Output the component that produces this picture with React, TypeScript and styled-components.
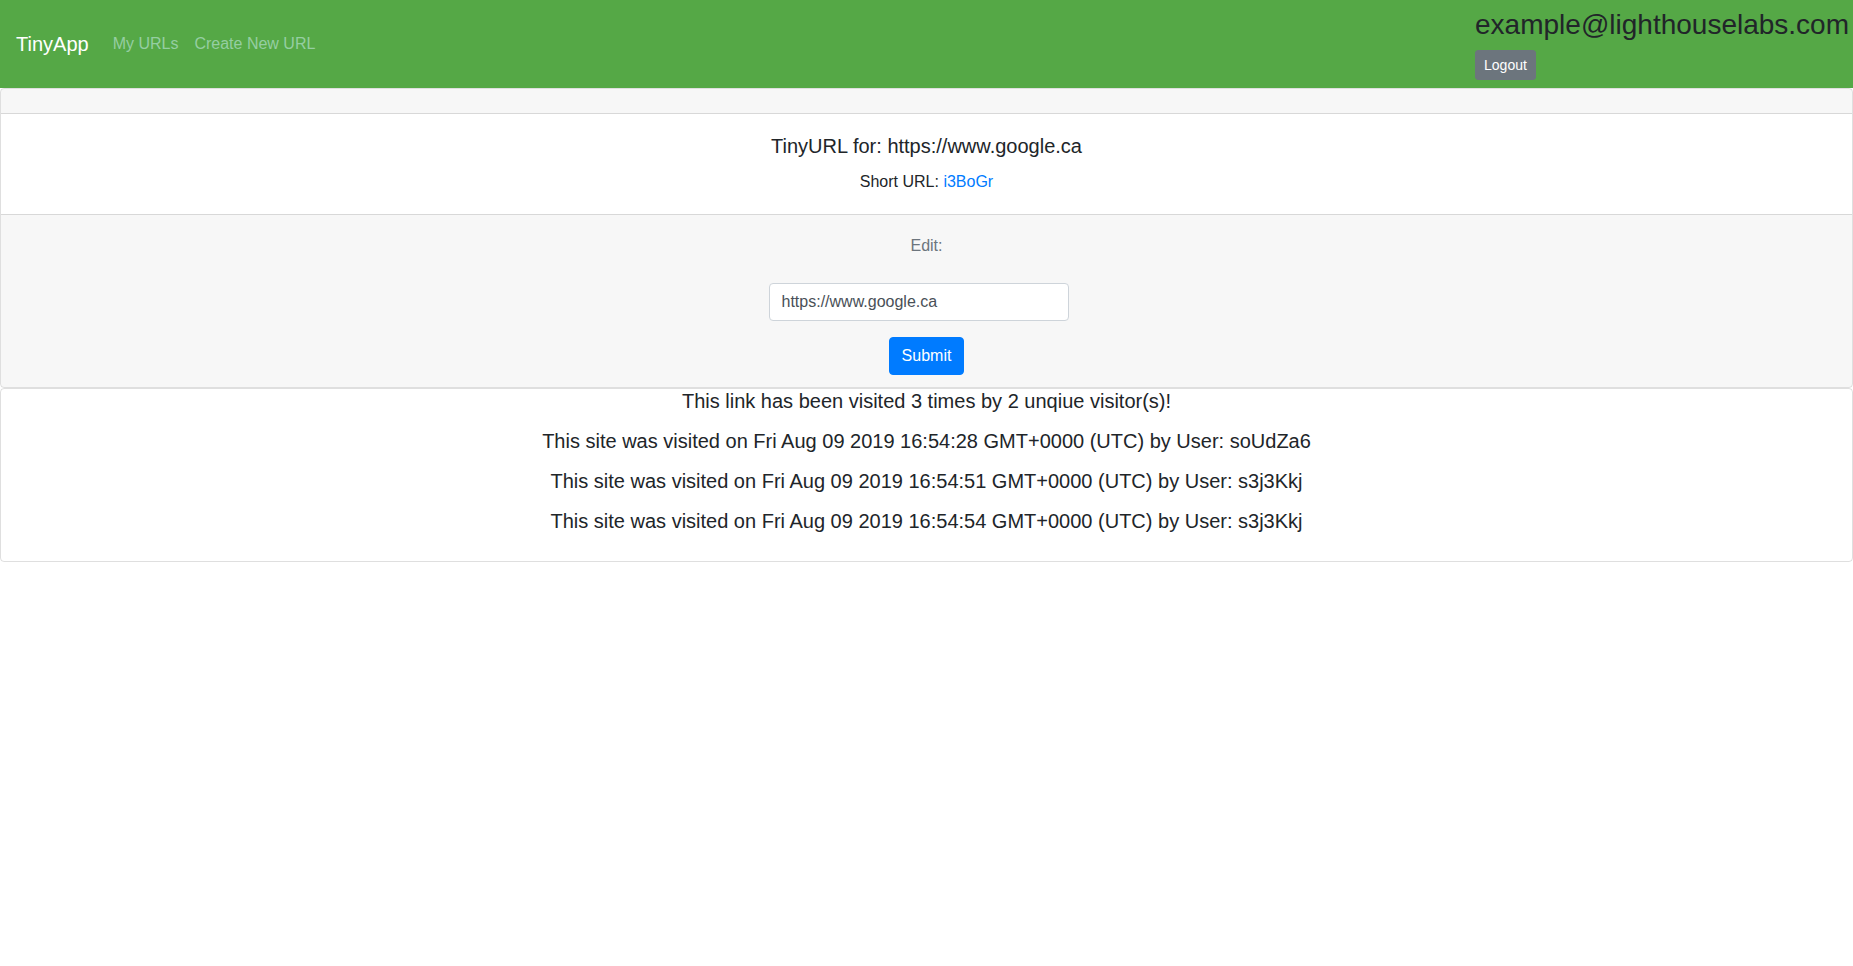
import React from 'react';
import styled, {createGlobalStyle} from 'styled-components';

const GlobalStyle = createGlobalStyle`
  * {
    box-sizing: border-box;
  }
  body {
    margin: 0;
    background: #fff;
    color: #212529;
    font-family: "Liberation Sans", Arial, sans-serif;
    font-size: 16px;
    line-height: 1.5;
  }
`

const Navbar = styled.nav`
  display: flex;
  align-items: center;
  height: 88px;
  background: #55a846;
  padding: 8px 4px 8px 16px;
`

const Brand = styled.a`
  color: #fff;
  font-size: 20px;
  line-height: 30px;
  margin-right: 16px;
  text-decoration: none;
`

const NavList = styled.ul`
  display: flex;
  list-style: none;
  margin: 0;
  padding: 0;

  a {
    display: block;
    padding: 8px;
    color: #95cea2;
    text-decoration: none;
  }
`

const UserBox = styled.div`
  margin-left: auto;
  display: flex;
  flex-direction: column;
  align-items: flex-start;

  h3 {
    margin: 0 0 8px;
    font-size: 28px;
    font-weight: 400;
    line-height: 1.2;
    color: #212529;
  }
`

const Button = styled.button<{ $variant: 'primary' | 'secondary'; $small?: boolean }>`
  font-family: inherit;
  color: #fff;
  background: ${({$variant}) => ($variant === 'primary' ? '#007bff' : '#6c757d')};
  border: 1px solid ${({$variant}) => ($variant === 'primary' ? '#007bff' : '#6c757d')};
  font-size: ${({$small}) => ($small ? '14px' : '16px')};
  line-height: ${({$small}) => ($small ? '20px' : '24px')};
  padding: ${({$small}) => ($small ? '4px 8px' : '6px 12px')};
  border-radius: ${({$small}) => ($small ? '3px' : '4px')};
  cursor: pointer;
`

const Card = styled.div`
  border: 1px solid rgba(0, 0, 0, 0.125);
  border-radius: 4px;
  overflow: hidden;
  text-align: center;
`

const CardHeader = styled.div`
  height: 25px;
  background: rgba(0, 0, 0, 0.03);
  border-bottom: 1px solid rgba(0, 0, 0, 0.125);
`

const CardBody = styled.div`
  padding: 20px;
`

const CardTitle = styled.h5`
  margin: 0 0 12px;
  font-size: 20px;
  font-weight: 400;
  line-height: 1.2;
`

const CardText = styled.p`
  margin: 0;

  a {
    color: #007bff;
    text-decoration: none;
  }
`

const CardFooter = styled.form`
  background: rgba(0, 0, 0, 0.03);
  border-top: 1px solid rgba(0, 0, 0, 0.125);
  padding: 12px 20px;
  display: flex;
  flex-direction: column;
  align-items: center;
`

const Label = styled.label`
  display: block;
  color: #6c757d;
  margin: 7px 0 25px;
`

const Input = styled.input`
  width: 300px;
  height: 38px;
  padding: 6px 12px;
  margin: 0 16px 16px 0;
  font-family: inherit;
  font-size: 16px;
  color: #495057;
  background: #fff;
  border: 1px solid #ced4da;
  border-radius: 4px;
`

const StatsBody = styled.div`
  padding: 0 20px 12px;

  p {
    margin: 0 0 16px;
    font-size: 20px;
    line-height: 1.2;
  }
`

const visits = [
    {date: 'Fri Aug 09 2019 16:54:28 GMT+0000 (UTC)', user: 'soUdZa6'},
    {date: 'Fri Aug 09 2019 16:54:51 GMT+0000 (UTC)', user: 's3j3Kkj'},
    {date: 'Fri Aug 09 2019 16:54:54 GMT+0000 (UTC)', user: 's3j3Kkj'},
]

export default function App() {
    return (
        <>
            <GlobalStyle/>
            <Navbar>
                <Brand href="#">TinyApp</Brand>
                <NavList>
                    <li><a href="#">My URLs</a></li>
                    <li><a href="#">Create New URL</a></li>
                </NavList>
                <UserBox>
                    <h3>example@lighthouselabs.com</h3>
                    <Button $variant="secondary" $small type="button">Logout</Button>
                </UserBox>
            </Navbar>

            <Card>
                <CardHeader/>
                <CardBody>
                    <CardTitle>TinyURL for: https://www.google.ca</CardTitle>
                    <CardText>Short URL: <a href="#">i3BoGr</a></CardText>
                </CardBody>
                <CardFooter onSubmit={e => e.preventDefault()}>
                    <Label htmlFor="longURL">Edit:</Label>
                    <Input id="longURL" type="text" defaultValue="https://www.google.ca"/>
                    <Button $variant="primary" type="submit">Submit</Button>
                </CardFooter>
            </Card>

            <Card>
                <StatsBody>
                    <p>This link has been visited 3 times by 2 unqiue visitor(s)!</p>
                    {visits.map((v, i) => (
                        <p key={i}>This site was visited on {v.date} by User: {v.user}</p>
                    ))}
                </StatsBody>
            </Card>
        </>
    );
}
